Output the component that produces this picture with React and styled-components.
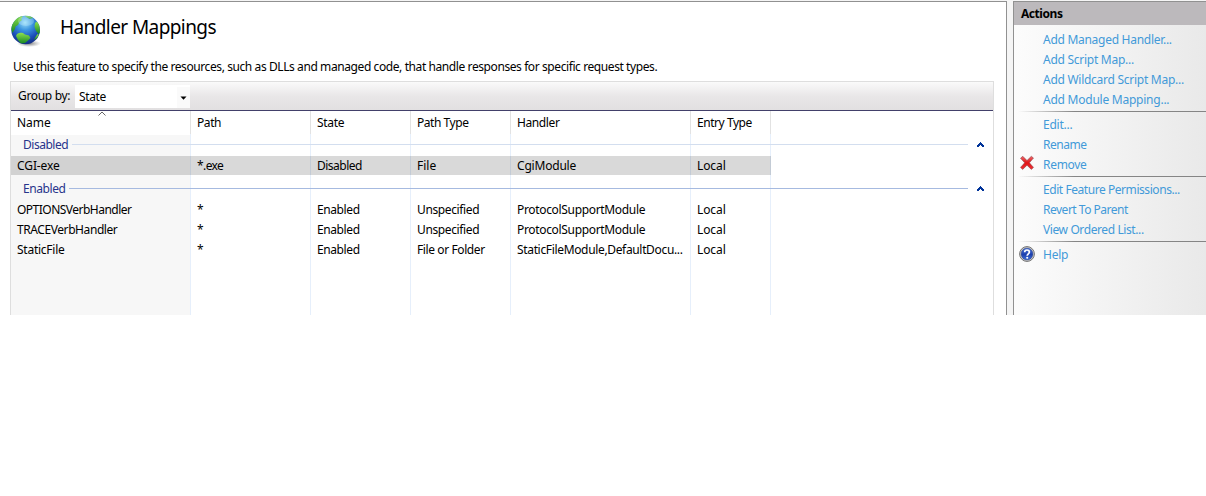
import React from "react";
import styled, { createGlobalStyle } from "styled-components";

const Global = createGlobalStyle`
  * { box-sizing: border-box; }
  body {
    margin: 0;
    background: #fff;
    color: #000;
    font: 12px/20px "Noto Sans", "Open Sans", sans-serif;
  }
  svg { display: block; flex: none; }
`;

const Window = styled.div`
  display: flex;
  width: 1206px;
  height: 315px;
  padding-top: 1px;
  background: #f5f5f5;
`;

const FeaturePane = styled.main`
  width: 1007px;
  padding: 12px 12px 0 10px;
  display: flex;
  flex-direction: column;
  background: #fff;
  border-top: 1px solid #919191;
  border-right: 1px solid #919191;
`;

const Heading = styled.header`
  display: flex;
  height: 43px;
  padding-left: 1px;
  gap: 19px;
`;

const Title = styled.h1`
  margin: 0;
  font-size: 19px;
  line-height: 26px;
  font-weight: 400;
  letter-spacing: -0.58px;
`;

const Description = styled.p`
  margin: 0 0 4px 3px;
  white-space: nowrap;
  letter-spacing: -0.41px;
`;

const Label = styled.span`
  display: block;
  line-height: 20px;
  white-space: nowrap;
  letter-spacing: ${(p) => p.$track ?? 0}px;
`;

const List = styled.section`
  flex: 1;
  display: flex;
  flex-direction: column;
  border: 1px solid #dedede;
  border-bottom: 0;
`;

const Toolbar = styled.div`
  display: flex;
  height: 29px;
  padding: 3px 0 0 7px;
  background: linear-gradient(#fafafa, #e9e7e8 50%, #e2e0e1);
  border-bottom: 1px solid #42406a;
`;

const ToolbarLabel = styled.div`
  width: 57px;
  padding-top: 1px;
`;

const Select = styled.div`
  display: flex;
  justify-content: space-between;
  width: 115px;
  height: 23px;
  padding: 2px 0 0 4px;
  background: #fff;
`;

const SelectButton = styled.span`
  display: flex;
  align-items: center;
  justify-content: center;
  width: 13px;
  background: #fafafa;
`;

const columns = "179px 120px 100px 100px 180px 80px 1fr";

const Table = styled.div`
  flex: 1;
  display: grid;
`;

const Stripes = styled.div`
  grid-area: 1 / 1;
  display: grid;
  grid-template-columns: ${columns};
`;

const Stripe = styled.div`
  background: linear-gradient(
    #fff 24px,
    ${(p) => (p.$sorted ? "#f7f7f7" : "#fff")} 24px
  );
  border-left: ${(p) => (p.$sorted ? "0" : "1px solid")};
  border-image: linear-gradient(#e2e2e2 24px, #e6effb 24px) 1;
`;

const Rows = styled.div`
  grid-area: 1 / 1;
`;

const Row = styled.div`
  display: grid;
  grid-template-columns: ${columns};
  height: 20px;
`;

const HeaderRow = styled(Row)`
  position: relative;
  height: 24px;
  padding-top: 2px;
`;

const SelectedRow = styled(Row)`
  width: 760px;
  grid-template-columns: 179px 120px 100px 100px 180px 80px;
  height: 19px;
  background: rgba(0, 0, 0, 0.15);
`;

const Cell = styled.div`
  padding-left: ${(p) => (p.$first ? 6 : 7)}px;
  white-space: nowrap;
`;

const SortMark = styled.svg`
  position: absolute;
  left: 87px;
  top: 0;
`;

const Group = styled.div`
  display: flex;
  align-items: center;
  height: 19px;
  margin: ${(p) => p.$margin};
  padding: 0 9px 0 12px;
  color: #27348b;
`;

const GroupName = styled.div`
  align-self: flex-start;
  width: ${(p) => p.$width}px;
`;

const GroupRule = styled.div`
  flex: 1;
  height: 1px;
  margin-right: 9px;
  background: ${(p) => p.$color};
`;

const ActionsPane = styled.aside`
  width: 193px;
  margin-left: 6px;
  background: linear-gradient(90deg, #fcfcfc, #e9e9e9);
  border-top: 1px solid #919191;
  border-left: 1px solid #919191;
`;

const ActionsTitle = styled.h2`
  margin: 0 0 5px;
  height: 23px;
  padding: 2px 0 0 7px;
  font-size: 12px;
  line-height: 20px;
  font-weight: 700;
  letter-spacing: -0.45px;
  background: #bcb9bc;
`;

const Action = styled.a`
  display: grid;
  grid-template-columns: 24px 1fr;
  height: 20px;
  padding-left: 5px;
  color: #429ad9;
`;

const ActionIcon = styled.span`
  padding-top: ${(p) => p.$drop ?? 0}px;
`;

const Separator = styled.div`
  height: 5px;
  padding: 1px 0 3px 4px;

  &::before {
    content: "";
    display: block;
    height: 1px;
    background: linear-gradient(90deg, transparent, #858585 30%);
  }
`;

function Globe() {
  return (
    <svg width="30" height="34" viewBox="0 0 30 34">
      <defs>
        <radialGradient id="sea" cx="48%" cy="24%" r="78%">
          <stop offset="0" stopColor="#9be0fa" />
          <stop offset="0.35" stopColor="#3b94df" />
          <stop offset="0.7" stopColor="#1b4fb9" />
          <stop offset="1" stopColor="#132a7c" />
        </radialGradient>
        <linearGradient id="land" x1="0" y1="0" x2="0" y2="1">
          <stop offset="0" stopColor="#8ee04e" />
          <stop offset="1" stopColor="#168722" />
        </linearGradient>
        <radialGradient id="shade">
          <stop offset="0" stopColor="#555" stopOpacity="0.75" />
          <stop offset="1" stopColor="#777" stopOpacity="0" />
        </radialGradient>
        <clipPath id="ball"><circle cx="14.6" cy="16" r="14.3" /></clipPath>
      </defs>
      <ellipse cx="18" cy="29.500" rx="12" ry="3.5" fill="url(#shade)" />
      <circle cx="14.6" cy="16" r="14.3" fill="url(#sea)" />
      <g clipPath="url(#ball)" fill="url(#land)">
        <path d="M0 15C0 8 4 3 10 1.500L12 3 10 4.500 11 6 8.500 8 7 11 4.500 12.500 4 15 1.500 19Z" />
        <path d="M13 1.500L20 1.500 22 4 18.500 5 16 3.500Z" />
        <path d="M24 9L26 7.500 30 12 29 19 27.500 20 25 17 23.500 13Z" />
        <path d="M5 22C6 18.500 9 18.500 12 19L14 20.500 18 21.500 19.500 24 17 26.500 14 29 10 29.500 7 26Z" />
        <path d="M26.500 20L28 21 25 25 23 26 24.500 23Z" />
      </g>
      <ellipse cx="15" cy="7" rx="8" ry="5" fill="#d5f5ff" opacity="0.28" />
    </svg>
  );
}

function RemoveIcon() {
  return (
    <svg width="16" height="16" viewBox="0 0 16 16">
      <defs>
        <linearGradient id="cross" x1="0" y1="0" x2="0" y2="1">
          <stop offset="0" stopColor="#f0686b" />
          <stop offset="0.5" stopColor="#e01316" />
          <stop offset="1" stopColor="#ee3438" />
        </linearGradient>
      </defs>
      <path
        d="M1.500 3.200 3.800 1.300 8 5.500 12.300 1.300 14.500 3 10.400 7.800 14.500 12.400 12.300 14.400 8 10.200 3.700 14.400 1.500 12.400 5.700 7.800Z"
        fill="url(#cross)"
        stroke="#854448"
        strokeWidth="0.8"
        strokeOpacity="0.7"
        strokeLinejoin="round"
      />
    </svg>
  );
}

function HelpIcon() {
  return (
    <svg width="16" height="16" viewBox="0 0 16 16">
      <defs>
        <linearGradient id="help" x1="0" y1="0" x2="0" y2="1">
          <stop offset="0" stopColor="#4b74d6" />
          <stop offset="0.55" stopColor="#1c3fae" />
          <stop offset="1" stopColor="#4272d8" />
        </linearGradient>
      </defs>
      <circle cx="8" cy="8" r="7.400" fill="#d0d0d0" stroke="#727272" />
      <circle cx="8" cy="8" r="5.900" fill="url(#help)" stroke="#2b3f80" strokeWidth="0.5" />
      <path
        d="M5.700 6.300C5.700 3.300 10.400 3.300 10.400 6.100 10.400 7.700 8.200 7.900 8.200 9.700"
        fill="none"
        stroke="#fff"
        strokeWidth="1.700"
      />
      <circle cx="8.200" cy="11.700" r="1.050" fill="#fff" />
    </svg>
  );
}

function Chevron() {
  return (
    <svg width="7" height="5" viewBox="0 0 7 5" shapeRendering="crispEdges">
      <path
        d="M3 0H4V1H5V2H6V3H7V5H5V4H4V3H3V4H2V5H0V3H1V2H2V1H3Z"
        fill="#003399"
      />
    </svg>
  );
}

const headers = [
  ["Name", -0.05],
  ["Path", -0.4],
  ["State", -0.3],
  ["Path Type", -0.45],
  ["Handler", -0.4],
  ["Entry Type", -0.45],
];

const disabledHandler = [
  ["CGI-exe", -0.1],
  ["*.exe", -0.6],
  ["Disabled", -0.5],
  ["File", 0],
  ["CgiModule", -0.2],
  ["Local", -0.1],
];

const enabledHandlers = [
  [
    ["OPTIONSVerbHandler", -0.52],
    ["*", 0],
    ["Enabled", -0.4],
    ["Unspecified", -0.38],
    ["ProtocolSupportModule", -0.33],
    ["Local", -0.1],
  ],
  [
    ["TRACEVerbHandler", -0.42],
    ["*", 0],
    ["Enabled", -0.4],
    ["Unspecified", -0.38],
    ["ProtocolSupportModule", -0.33],
    ["Local", -0.1],
  ],
  [
    ["StaticFile", -0.25],
    ["*", 0],
    ["Enabled", -0.4],
    ["File or Folder", -0.4],
    ["StaticFileModule,DefaultDocu...", -0.34],
    ["Local", -0.1],
  ],
];

const actionGroups = [
  [
    ["Add Managed Handler...", -0.28],
    ["Add Script Map...", -0.27],
    ["Add Wildcard Script Map...", -0.27],
    ["Add Module Mapping...", -0.24],
  ],
  [
    ["Edit...", -0.25],
    ["Rename", -0.45],
    ["Remove", -0.3, RemoveIcon, 0],
  ],
  [
    ["Edit Feature Permissions...", -0.44],
    ["Revert To Parent", -0.49],
    ["View Ordered List...", -0.4],
  ],
  [["Help", -0.25, HelpIcon, 1]],
];

const cells = (items) =>
  items.map(([text, track], i) => (
    <Cell key={i} $first={i === 0}>
      <Label $track={track}>{text}</Label>
    </Cell>
  ));

export default function App() {
  return (
    <>
      <Global />
      <Window>
        <FeaturePane>
          <Heading>
            <Globe />
            <Title>Handler Mappings</Title>
          </Heading>
          <Description>
            Use this feature to specify the resources, such as DLLs and managed
            code, that handle responses for specific request types.
          </Description>
          <List>
            <Toolbar>
              <ToolbarLabel>
                <Label $track={-0.33}>Group by:</Label>
              </ToolbarLabel>
              <Select>
                <Label $track={-0.35}>State</Label>
                <SelectButton>
                  <svg width="7" height="4" viewBox="0 0 7 4">
                    <path d="M0.500 0.500H6.500L3.500 3.700Z" fill="#000" />
                  </svg>
                </SelectButton>
              </Select>
            </Toolbar>
            <Table>
              <Stripes>
                <Stripe $sorted />
                {[1, 2, 3, 4, 5, 6].map((n) => (
                  <Stripe key={n} />
                ))}
              </Stripes>
              <Rows>
                <HeaderRow>
                  {cells(headers)}
                  <SortMark width="8" height="5" viewBox="0 0 8 5">
                    <path d="M0.500 4.500 4 1 7.500 4.500" fill="none" stroke="#666" />
                  </SortMark>
                </HeaderRow>
                <Group $margin="0 0 2px">
                  <GroupName $width={49}>
                    <Label $track={-0.47}>Disabled</Label>
                  </GroupName>
                  <GroupRule $color="#d3deef" />
                  <Chevron />
                </Group>
                <SelectedRow>{cells(disabledHandler)}</SelectedRow>
                <Group $margin="4px 0 2px">
                  <GroupName $width={46}>
                    <Label $track={-0.43}>Enabled</Label>
                  </GroupName>
                  <GroupRule $color="#a6bae0" />
                  <Chevron />
                </Group>
                {enabledHandlers.map((row, i) => (
                  <Row key={i}>{cells(row)}</Row>
                ))}
              </Rows>
            </Table>
          </List>
        </FeaturePane>
        <ActionsPane>
          <ActionsTitle>Actions</ActionsTitle>
          {actionGroups.map((group, i) => (
            <React.Fragment key={i}>
              {i > 0 && <Separator />}
              {group.map(([text, track, Icon, drop]) => (
                <Action key={text}>
                  <ActionIcon $drop={drop}>{Icon && <Icon />}</ActionIcon>
                  <Label $track={track}>{text}</Label>
                </Action>
              ))}
            </React.Fragment>
          ))}
        </ActionsPane>
      </Window>
    </>
  );
}
